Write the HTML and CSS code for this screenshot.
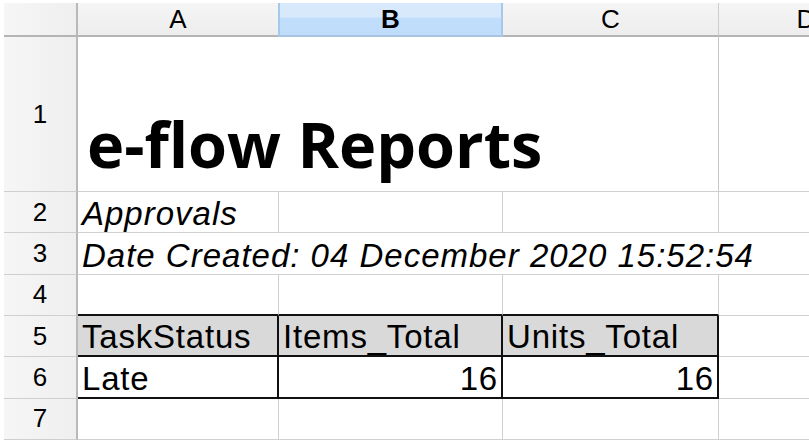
FILE: index.html
```html
<!DOCTYPE html>
<html lang="en">
<head>
    <meta charset="UTF-8">
    <title>e-flow Reports</title>
    <link rel="stylesheet" href="styles.css">
</head>
<body>
    <div class="sheet">
        <!-- column headers -->
        <div class="corner"></div>
        <div class="col-head">A</div>
        <div class="col-head selected">B</div>
        <div class="col-head">C</div>
        <div class="col-head last">D</div>

        <!-- row 1 -->
        <div class="row-head">1</div>
        <div class="cell title">e-flow Reports</div>
        <div class="cell last"></div>

        <!-- row 2 -->
        <div class="row-head">2</div>
        <div class="cell note">Approvals</div>
        <div class="cell"></div>
        <div class="cell"></div>
        <div class="cell last"></div>

        <!-- row 3 -->
        <div class="row-head">3</div>
        <div class="cell note wide">Date Created: 04 December 2020 15:52:54</div>

        <!-- row 4 -->
        <div class="row-head">4</div>
        <div class="cell above"></div>
        <div class="cell above"></div>
        <div class="cell above"></div>
        <div class="cell last"></div>

        <!-- row 5 -->
        <div class="row-head">5</div>
        <div class="cell boxed th">TaskStatus</div>
        <div class="cell boxed th">Items_Total</div>
        <div class="cell boxed th">Units_Total</div>
        <div class="cell last"></div>

        <!-- row 6 -->
        <div class="row-head">6</div>
        <div class="cell boxed">Late</div>
        <div class="cell boxed num">16</div>
        <div class="cell boxed num">16</div>
        <div class="cell last"></div>

        <!-- row 7 -->
        <div class="row-head">7</div>
        <div class="cell"></div>
        <div class="cell"></div>
        <div class="cell"></div>
        <div class="cell last"></div>
    </div>
</body>
</html>
```

FILE: styles.css
```css
*{
    margin: 0;
    padding: 0;
    box-sizing: border-box;
}

body{
    background: #fff;
    color: #000;
    font-family: 'Liberation Sans', Arial, sans-serif;
    overflow: hidden;
}

.sheet{
    display: grid;
    grid-template-columns: 74px 201px 224px 216px 174px;
    grid-template-rows: 34px 155px repeat(6, 41.33px);
    padding: 3px 0 0 4px;
}

/* headers */
.corner,
.col-head,
.row-head{
    background: linear-gradient(to right, #f6f6f6, #efefef);
    border-right: 2px solid #b9b9b9;
    border-bottom: 1px solid #cfcfcf;
}

.corner,
.col-head{
    border-bottom: 2px solid #b4b4b4;
}

.col-head{
    display: flex;
    align-items: center;
    justify-content: center;
    font-size: 26px;
    padding-top: 1px;
    background: linear-gradient(#f5f5f5, #ededed);
    border-right: 1px solid #cdcdcd;
}

.col-head.selected{
    font-weight: bold;
    background: linear-gradient(#d8e9fc 0%, #d8e9fc 45%, #c0ddfb 46%, #bfdcfa 100%);
    border-left: 2px solid #a6c8ec;
    border-right: 2px solid #a6c8ec;
    border-bottom-color: #a9c4e2;
    margin-left: -1px;
}

.col-head.last{
    border-right: none;
}

.row-head{
    display: flex;
    align-items: center;
    justify-content: center;
    font-size: 26px;
}

/* cells */
.cell{
    display: flex;
    align-items: flex-end;
    padding: 0 3px 2px 4px;
    font-size: 33px;
    letter-spacing: 0.8px;
    line-height: 1;
    white-space: nowrap;
    border-right: 1px solid #d0d0d0;
    border-bottom: 1px solid #d0d0d0;
}

.cell.last{
    border-right: none;
}

.title{
    grid-column: span 3;
    font-family: 'Open Sans', 'Liberation Sans', sans-serif;
    font-weight: bold;
    font-size: 63px;
    letter-spacing: 0;
    padding: 0 0 16px 9px;
    border-right-color: #c8c8c8;
}

.note{
    font-style: italic;
    letter-spacing: 1px;
}

.wide{
    grid-column: span 4;
    border-right: none;
}

.above{
    border-bottom: 2px solid #111;
}

.boxed{
    border-right: 2px solid #111;
    border-bottom: 2px solid #111;
}

.th{
    background: #d9d9d9;
}

.num{
    justify-content: flex-end;
}
```
